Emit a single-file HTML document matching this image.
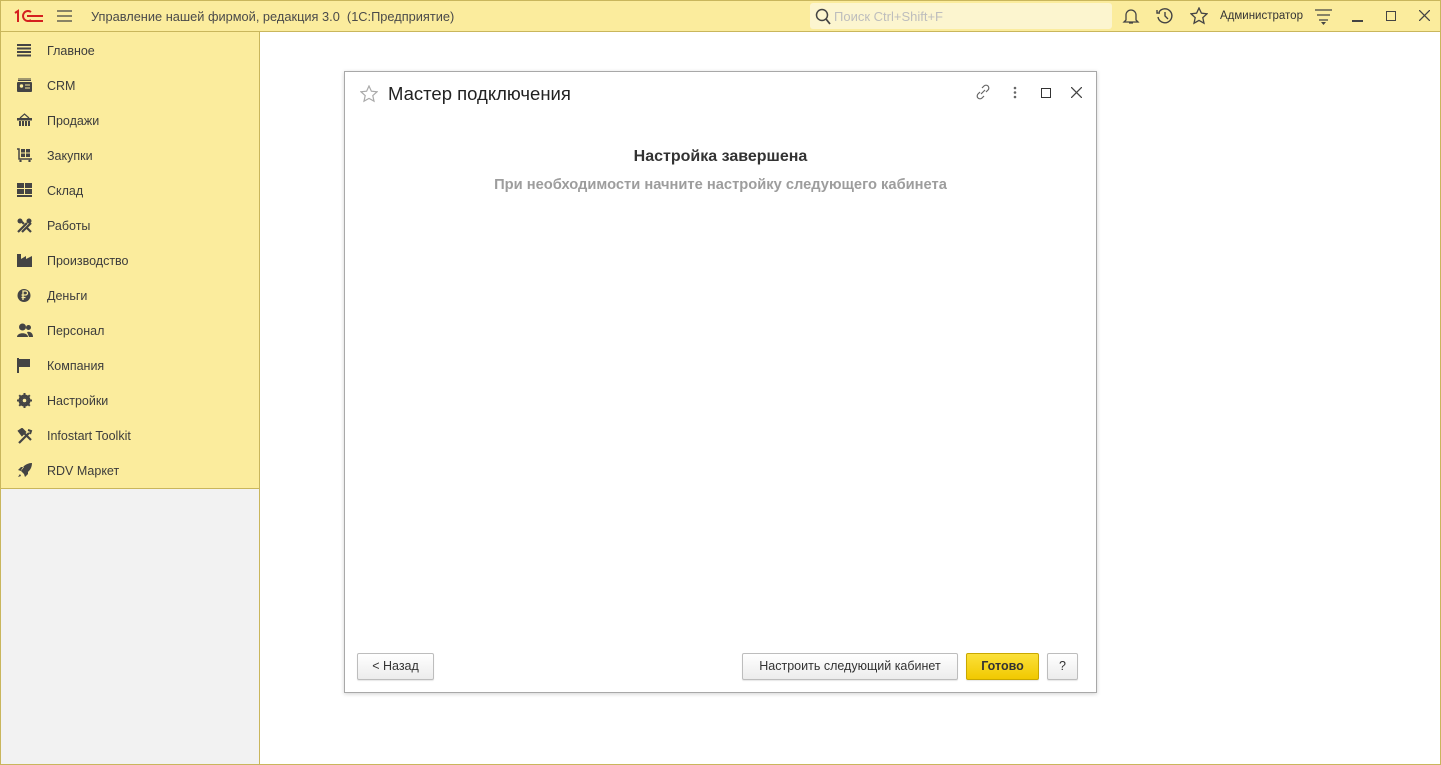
<!DOCTYPE html>
<html><head><meta charset="utf-8"><style>
*{box-sizing:border-box;margin:0;padding:0}
body{width:1441px;height:765px;position:relative;overflow:hidden;font-family:"Liberation Sans",Arial,sans-serif;background:#fff}
.frame{position:absolute;left:0;top:0;width:1441px;height:765px;border:1px solid #c9b65c;pointer-events:none;z-index:10}
.top{position:absolute;left:0;top:0;width:1441px;height:32px;background:#fbec9d;border-bottom:1px solid #c9b65c}
.title{position:absolute;left:91px;top:9px;font-size:12.8px;color:#4a4a4a}
.search{position:absolute;left:810px;top:3px;width:302px;height:26px;background:#fcf5cf;border-radius:3px}
.search span{position:absolute;left:24px;top:6px;font-size:13px;color:#bdbdbd}
.side{position:absolute;left:0;top:32px;width:260px;height:457px;background:#fbec9d;border-right:1px solid #c9b65c;border-bottom:1px solid #c9b65c}
.gray{position:absolute;left:0;top:489px;width:260px;height:276px;background:#f2f2f2;border-right:1px solid #c9b65c}
.item{position:absolute;left:0;height:35px;width:259px}
.item span{position:absolute;left:47px;top:11px;font-size:12.5px;color:#3c3c3c}
.item svg{position:absolute;left:17px;top:10px}
.dlg{position:absolute;left:344px;top:71px;width:753px;height:622px;border:1px solid #a8a8a8;background:#fff;box-shadow:0 1px 4px rgba(0,0,0,.18)}
.dt{position:absolute;left:43px;top:11px;font-size:18.5px;color:#222}
.h1{position:absolute;left:0;width:100%;top:76px;text-align:center;font-weight:bold;font-size:16px;color:#333}
.h2{position:absolute;left:0;width:100%;top:105px;text-align:center;font-weight:bold;font-size:14.7px;color:#9d9d9d}
.btn{position:absolute;top:581px;height:27px;border:1px solid #bdbdbd;border-radius:2px;background:linear-gradient(#fff,#ececec);font-size:12.5px;color:#333;text-align:center;line-height:25px;box-shadow:0 1px 1px rgba(0,0,0,.1)}
.ok{background:linear-gradient(#fbe03a,#f1c900);border-color:#c9a800;font-weight:bold}
</style></head><body>
<div class="top">
 <svg style="position:absolute;left:13px;top:9px" width="32" height="14" viewBox="0 0 32 14"><g fill="none" stroke="#d4201f" stroke-width="2"><path d="M2 4l3-2v11"/><path d="M18 3a5 5 0 1 0 0 8"/><path d="M14 7h16M15 12h15M16 2h0"/></g></svg>
 <svg style="position:absolute;left:57px;top:10px" width="15" height="12"><g stroke="#444" stroke-width="1.3"><path d="M0 1h15M0 6h15M0 11h15"/></g></svg>
 <div class="title">Управление нашей фирмой, редакция 3.0&nbsp; (1С:Предприятие)</div>
 <div class="search"><svg style="position:absolute;left:5px;top:5px" width="16" height="17"><circle cx="7" cy="7" r="5.5" fill="none" stroke="#444" stroke-width="1.5"/><path d="M11 11l4 5" stroke="#444" stroke-width="1.8"/></svg><span>Поиск Ctrl+Shift+F</span></div>
 <svg style="position:absolute;left:1122px;top:8px" width="18" height="17"><path d="M4 12V7a5 5 0 0 1 10 0v5l2 2H2zM7 15h4" fill="none" stroke="#444" stroke-width="1.3"/></svg>
 <svg style="position:absolute;left:1156px;top:7px" width="18" height="18"><path d="M3 5a7 7 0 1 1-1 5M1 3v3h3M9 5v4l3 3" fill="none" stroke="#444" stroke-width="1.4"/></svg>
 <svg style="position:absolute;left:1190px;top:7px" width="18" height="18"><path d="M9 1l2.4 5.2 5.6.6-4.2 3.8 1.2 5.6L9 13.4 4 16.2l1.2-5.6L1 6.8l5.6-.6z" fill="none" stroke="#444" stroke-width="1.3"/></svg>
 <div style="position:absolute;left:1220px;top:10px;font-size:11.5px;color:#333">Администратор</div>
 <svg style="position:absolute;left:1315px;top:9px" width="17" height="16"><path d="M0 1h17M2 6h13M4 11h9" stroke="#444" stroke-width="1.3"/><path d="M6 13h5l-2.5 3z" fill="#444"/></svg>
 <div style="position:absolute;left:1352px;top:20px;width:11px;height:1.5px;background:#444"></div>
 <div style="position:absolute;left:1386px;top:11px;width:10px;height:10px;border:1.4px solid #444"></div>
 <svg style="position:absolute;left:1419px;top:10px" width="11" height="11"><path d="M0 0l11 11M11 0L0 11" stroke="#444" stroke-width="1.3"/></svg>
</div>
<div class="side">
 <div class="item" style="top:1px"><svg width="14" height="14"><path d="M0 2h14M0 5.5h14M0 9h14M0 12.5h14" stroke="#444" stroke-width="2"/></svg><span>Главное</span></div>
 <div class="item" style="top:36px"><svg width="15" height="14"><rect x="0" y="4" width="15" height="10" rx="1" fill="#444"/><path d="M1 1h13M1 2.5h13" stroke="#444"/><circle cx="4.5" cy="8" r="1.7" fill="#fbec9d"/><path d="M8 7h5M8 10h5" stroke="#fbec9d"/></svg><span>CRM</span></div>
 <div class="item" style="top:71px"><svg width="15" height="14"><path d="M3 5l4.5-4 4.5 4" fill="none" stroke="#444" stroke-width="1.2"/><rect x="0" y="5" width="15" height="2.5" fill="#444"/><path d="M2 8h11v5H2z" fill="#444"/><path d="M4.5 8v5M7.5 8v5M10.5 8v5" stroke="#fbec9d"/></svg><span>Продажи</span></div>
 <div class="item" style="top:106px"><svg width="15" height="14"><path d="M0 1h2v10h13" fill="none" stroke="#444" stroke-width="1.5"/><rect x="4" y="1" width="4" height="3.5" fill="#444"/><rect x="9" y="1" width="4" height="3.5" fill="#444"/><rect x="4" y="5.5" width="4" height="3.5" fill="#444"/><rect x="9" y="5.5" width="4" height="3.5" fill="#444"/><circle cx="3.5" cy="13" r="1.2" fill="#444"/><circle cx="12.5" cy="13" r="1.2" fill="#444"/></svg><span>Закупки</span></div>
 <div class="item" style="top:141px"><svg width="15" height="14"><rect x="0" y="0" width="7" height="5" fill="#444"/><rect x="8" y="0" width="7" height="5" fill="#444"/><rect x="0" y="6" width="7" height="5" fill="#444"/><rect x="8" y="6" width="7" height="5" fill="#444"/><rect x="0" y="12" width="15" height="2" fill="#444"/></svg><span>Склад</span></div>
 <div class="item" style="top:176px"><svg width="15" height="15"><path d="M1 14L10 5M3 2l4 4M5 14l9-9M10 10l4 4" stroke="#444" stroke-width="2.2"/><circle cx="3" cy="3" r="2.5" fill="#444"/><circle cx="12" cy="3" r="2.5" fill="#444"/></svg><span>Работы</span></div>
 <div class="item" style="top:211px"><svg width="15" height="14"><path d="M0 14V1h4v5l5-3v3l6-3v11z" fill="#444"/></svg><span>Производство</span></div>
 <div class="item" style="top:246px"><svg width="15" height="15"><circle cx="7" cy="7.5" r="6.5" fill="#444"/><path d="M6 12V3h2.5a2 2 0 0 1 0 4H4.5M4.5 9.5h4" fill="none" stroke="#fbec9d" stroke-width="1.3"/></svg><span>Деньги</span></div>
 <div class="item" style="top:281px"><svg width="16" height="14"><circle cx="5.5" cy="4" r="3.5" fill="#444"/><path d="M0 14c0-5 11-5 11 0z" fill="#444"/><circle cx="11.5" cy="4.5" r="2.5" fill="#444"/><path d="M10 9c3-1 6 1 6 5h-4z" fill="#444"/></svg><span>Персонал</span></div>
 <div class="item" style="top:316px"><svg width="14" height="15"><path d="M1 0v15" stroke="#444" stroke-width="2"/><path d="M2 1h11v8H2z" fill="#444"/></svg><span>Компания</span></div>
 <div class="item" style="top:351px"><svg width="15" height="15"><circle cx="7.5" cy="7.5" r="4.5" fill="none" stroke="#444" stroke-width="3"/><path d="M7.5 0v15M0 7.5h15M2.2 2.2l10.6 10.6M12.8 2.2L2.2 12.8" stroke="#444" stroke-width="2"/><circle cx="7.5" cy="7.5" r="1.8" fill="#fbec9d"/></svg><span>Настройки</span></div>
 <div class="item" style="top:386px"><svg width="16" height="16"><path d="M2 15L12 5M4 2l10 10M2 3l3-2 3 3-3 3z" stroke="#444" stroke-width="2.2" fill="#444"/><path d="M11 2l3 1-1 3" stroke="#444" stroke-width="2" fill="none"/></svg><span>Infostart Toolkit</span></div>
 <div class="item" style="top:421px"><svg width="15" height="15"><path d="M15 0c-6 0-10 4-11 8l3 3c4-1 8-5 8-11zM4 8L1 7l3-3h3zM7 11l1 3 3-3V8z" fill="#444"/><path d="M3 11l-2 3 3-1" fill="#444"/></svg><span>RDV Маркет</span></div>
</div>
<div class="gray"></div>
<div class="dlg">
 <svg style="position:absolute;left:15px;top:13px" width="18" height="18"><path d="M9 1l2.4 5.2 5.6.6-4.2 3.8 1.2 5.6L9 13.4 4 16.2l1.2-5.6L1 6.8l5.6-.6z" fill="none" stroke="#aaa" stroke-width="1.2"/></svg>
 <div class="dt">Мастер подключения</div>
 <svg style="position:absolute;left:630px;top:12px" width="16" height="16"><path d="M6 10l4-4M7 4l2-2a2.8 2.8 0 0 1 4 4l-2 2M9 12l-2 2a2.8 2.8 0 0 1-4-4l2-2" fill="none" stroke="#666" stroke-width="1.2"/></svg>
 <svg style="position:absolute;left:668px;top:14px" width="4" height="13"><circle cx="2" cy="2" r="1.3" fill="#666"/><circle cx="2" cy="6.5" r="1.3" fill="#666"/><circle cx="2" cy="11" r="1.3" fill="#666"/></svg>
 <div style="position:absolute;left:696px;top:16px;width:10px;height:10px;border:1.4px solid #333"></div>
 <svg style="position:absolute;left:726px;top:15px" width="11" height="11"><path d="M0 0l11 11M11 0L0 11" stroke="#444" stroke-width="1.3"/></svg>
 <div class="h1">Настройка завершена</div>
 <div class="h2">При необходимости начните настройку следующего кабинета</div>
 <div class="btn" style="left:12px;width:77px">&lt; Назад</div>
 <div class="btn" style="left:397px;width:216px">Настроить следующий кабинет</div>
 <div class="btn ok" style="left:621px;width:73px">Готово</div>
 <div class="btn" style="left:702px;width:31px">?</div>
</div>
<div class="frame"></div>
</body></html>
